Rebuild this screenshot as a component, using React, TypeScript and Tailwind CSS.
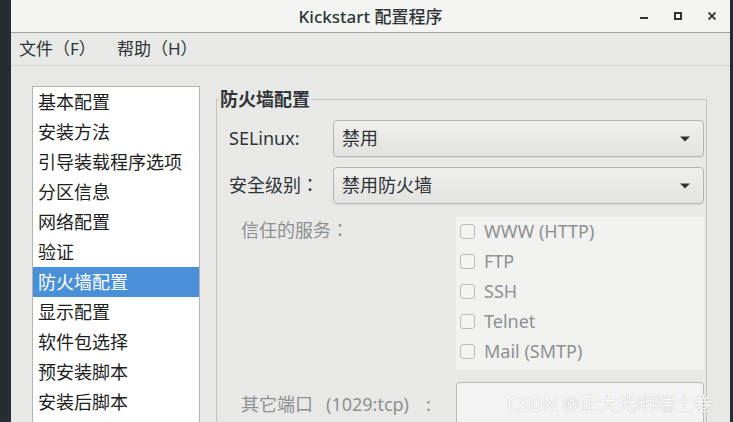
const items = [
  "基本配置",
  "安装方法",
  "引导装载程序选项",
  "分区信息",
  "网络配置",
  "验证",
  "防火墙配置",
  "显示配置",
  "软件包选择",
  "预安装脚本",
  "安装后脚本",
];

const services = ["WWW (HTTP)", "FTP", "SSH", "Telnet", "Mail (SMTP)"];

function Combo({ value }: { value: string }) {
  return (
    <div className="flex h-[37px] flex-1 items-center justify-between rounded-[4px] border border-[#b4b4b2] bg-gradient-to-b from-[#efefee] to-[#e2e2e0] pl-[8px] pr-[13px] text-[#2e3436] shadow-[0_1px_0_rgba(0,0,0,0.06)]">
      <span>{value}</span>
      <svg width="10" height="6" viewBox="0 0 10 6">
        <path d="M0 0.5H10L5 5.5Z" fill="#2e3436" />
      </svg>
    </div>
  );
}

export default function App() {
  return (
    <div className="relative flex h-[422px] w-[733px] overflow-hidden bg-[#252d32] font-['Noto_Sans','Noto_Sans_CJK_SC',sans-serif] text-[18px] text-[#2e3436]">
      <div className="w-[11px] shrink-0" />
      <div className="flex w-[719px] shrink-0 flex-col bg-[#e8e8e7]">
        {/* title bar */}
        <div className="relative flex h-[33px] shrink-0 items-center justify-center border-b border-[#a3a3a1] bg-[#f4f4f3]">
          <span className="text-[17px] font-medium leading-none">Kickstart 配置程序</span>
          <div className="absolute top-0 right-[14px] flex h-full items-center gap-[26px] pb-[1px]">
            <svg width="8" height="8" viewBox="0 0 8 8">
              <rect x="0" y="5" width="8" height="2" fill="#2e3436" />
            </svg>
            <svg width="8" height="8" viewBox="0 0 8 8">
              <rect x="1" y="1" width="6" height="6" fill="none" stroke="#2e3436" strokeWidth="2" />
            </svg>
            <svg width="8" height="8" viewBox="0 0 8 8">
              <path d="M0.5 0.5L7.5 7.5M7.5 0.5L0.5 7.5" stroke="#2e3436" strokeWidth="1.8" />
            </svg>
          </div>
        </div>

        {/* menu bar */}
        <div className="flex h-[33px] shrink-0 items-center border-b border-[#d2d2d0] pl-[8px] text-[17px]">
          <span className="w-[98px]">文件（F）</span>
          <span>帮助（H）</span>
        </div>

        {/* content */}
        <div className="flex flex-1 pl-[21px]">
          <div className="mt-[20px] h-[360px] w-[168px] shrink-0 border border-[#b3b3b1] bg-white">
            {items.map((it) => (
              <div
                key={it}
                className={
                  it === "防火墙配置"
                    ? "h-[30px] bg-[#4a90d9] pl-[5px] leading-[30px] text-white"
                    : "h-[30px] pl-[5px] leading-[30px] text-[#1e1e1e]"
                }
              >
                {it}
              </div>
            ))}
          </div>

          <fieldset className="mt-[21px] ml-[16px] h-[360px] w-[491px] shrink-0 border border-[#c2c2bf]">
            <legend className="ml-[2px] px-[1px] text-[18px] leading-[24px] font-bold">防火墙配置</legend>
            <div className="pt-[9px] pr-[2px] pl-[12px]">
              <div className="flex items-center">
                <span className="w-[104px]">SELinux:</span>
                <Combo value="禁用" />
              </div>
              <div className="mt-[10px] flex items-center">
                <span className="w-[104px] font-['Noto_Sans','Noto_Sans_CJK_TC',sans-serif]">安全级别：</span>
                <Combo value="禁用防火墙" />
              </div>

              <div className="mt-[13px] flex text-[#8d9091]">
                <span className="w-[227px] shrink-0 pl-[12px] leading-[26px] font-['Noto_Sans','Noto_Sans_CJK_TC',sans-serif]">
                  信任的服务：
                </span>
                <div className="flex-1 bg-[#f1f1f0] pb-[3px]">
                  {services.map((s) => (
                    <div key={s} className="flex h-[30px] items-center gap-[9px] pb-[2px] pl-[4px]">
                      <span className="h-[15px] w-[15px] rounded-[3px] border border-[#bcbcba] bg-[#f3f3f2]" />
                      <span>{s}</span>
                    </div>
                  ))}
                </div>
              </div>

              <div className="mt-[12px] flex items-start text-[#8d9091]">
                <span className="w-[227px] shrink-0 pt-[9px] pl-[12px] whitespace-nowrap">
                  其它端口<span className="ml-[13px]">(1029:tcp)</span>
                  <span className="ml-[17px]">:</span>
                </span>
                <div className="h-[44px] flex-1 rounded-[4px] border border-[#b8b8b6] bg-[#f3f3f3]" />
              </div>
            </div>
          </fieldset>
        </div>
      </div>
      <div className="w-[3px] shrink-0" />

      <div className="absolute top-[391px] left-[507px] text-[19px] leading-[26px] text-[#fcfcfc] [text-shadow:0_0_1px_rgba(0,0,0,0.35)]">
        CSDN @正大光明瑞士卷
      </div>
    </div>
  );
}
